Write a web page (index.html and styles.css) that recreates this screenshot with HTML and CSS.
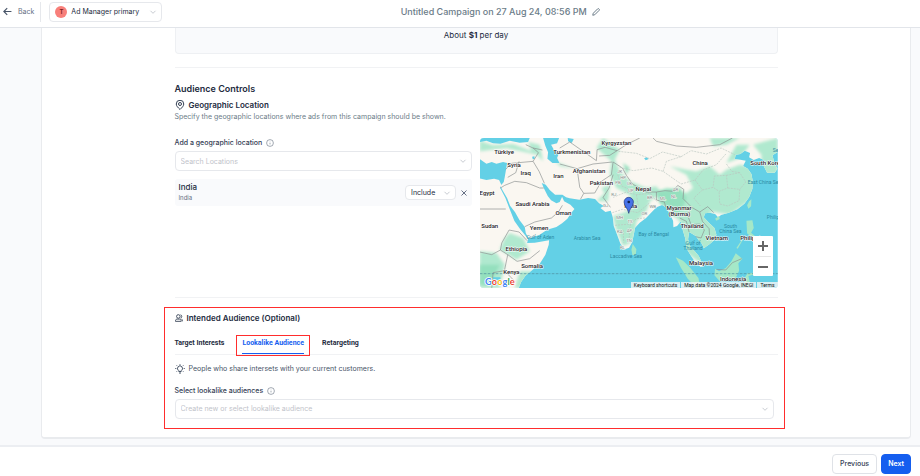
FILE: index.html
```
<!DOCTYPE html>
<html lang="en">
<head>
  <meta charset="UTF-8" />
  <meta name="viewport" content="width=device-width, initial-scale=1">
  <title>Untitled Campaign</title>
  <link rel="stylesheet" href="styles.css">
</head>
<body>
  <svg class="defs" aria-hidden="true">
    <symbol id="chevron" viewBox="0 0 8 8"><path d="M1.5 2.8 4 5.3l2.5-2.5"/></symbol>
    <symbol id="info" viewBox="0 0 16 16"><circle cx="8" cy="8" r="6.8"/><path d="M8 7.4v3.4M8 5v.6"/></symbol>
  </svg>

  <header class="topbar">
    <a href="#" class="back">
      <svg class="icon" viewBox="0 0 16 16"><path d="M15 8H1.5M7.5 2l-6 6 6 6"/></svg>
      Back
    </a>
    <div class="select-wrap account">
      <span class="avatar">T</span>
      <select aria-label="Account"><option>Ad Manager primary</option></select>
      <svg class="chevron"><use href="#chevron"/></svg>
    </div>
    <div class="campaign">
      <h1>Untitled Campaign on 27 Aug 24, 08:56 PM</h1>
      <button type="button" class="plain" aria-label="Edit name">
        <svg class="icon" viewBox="0 0 16 16"><path d="M1.5 14.5l1-4L11.300 1.700a1.700 1.700 0 0 1 2.500 0l.5.5a1.700 1.700 0 0 1 0 2.500L5.500 13.500z"/></svg>
      </button>
    </div>
  </header>

  <main class="page">
    <div class="card">
      <div class="content">
        <div class="budget">About <b>$1</b> per day</div>
        <hr>

        <section class="controls">
          <h2>Audience Controls</h2>
          <h3>
            <svg class="icon" viewBox="0 0 18 20"><path d="M9 19C5 15 1.500 12 1.500 8a7.500 7.500 0 0 1 15 0c0 4-3.500 7-7.500 11z"/><circle cx="9" cy="8" r="3"/></svg>
            Geographic Location
          </h3>
          <p class="desc">Specify the geographic locations where ads from this campaign should be shown.</p>

          <div class="geo">
            <div class="geo-form">
              <label for="location">Add a geographic location <svg class="info"><use href="#info"/></svg></label>
              <div class="select-wrap field">
                <input type="text" id="location" placeholder="Search Locations">
                <svg class="chevron"><use href="#chevron"/></svg>
              </div>
              <div class="place">
                <div class="place-name">
                  <strong>India</strong>
                  <span>India</span>
                </div>
                <div class="select-wrap include">
                  <select aria-label="Include or exclude"><option>Include</option><option>Exclude</option></select>
                  <svg class="chevron"><use href="#chevron"/></svg>
                </div>
                <button type="button" class="plain remove" aria-label="Remove">
                  <svg viewBox="0 0 8 8"><path d="M1.500 1.500l5 5M6.500 1.500l-5 5"/></svg>
                </button>
              </div>
            </div>

            <div class="map">
              <svg class="map-canvas" viewBox="0 0 894 450" preserveAspectRatio="xMidYMid slice">
                <defs>
                  <filter id="soft" x="-10%" y="-10%" width="120%" height="120%"><feGaussianBlur stdDeviation="5"/></filter>
                  <clipPath id="land">
                    <path id="asia" d="M0 0H894V42L878 52 884 75 893 92 885 104 862 104 852 84 857 68 838 60 822 66 808 58 811 45 795 38 782 48 768 50 765 63 782 65 798 68 790 84 804 92 815 108 819 130 818 152 808 178 794 197 773 214 747 224 724 231 715 238 706 228 690 224 676 226 672 238 686 253 704 270 710 290 704 306 690 318 672 331 667 318 658 308 648 294 637 287 628 282 625 304 632 327 645 340 657 354 671 384 663 387 646 372 634 354 620 331 617 303 609 276 604 250 592 264 581 268 580 248 569 226 558 208 547 201 530 208 514 224 499 240 480 254 466 269 462 291 457 313 448 329 435 334 422 317 411 287 402 264 399 238 393 218 377 222 362 210 373 204 358 196 346 183 325 180 299 185 270 181 259 178 248 170 226 170 210 156 198 140 186 135 192 150 204 174 214 187 230 196 240 192 247 176 253 190 272 200 284 213 272 228 263 242 247 256 230 267 202 275 180 290 147 302 138 285 135 267 119 246 106 223 91 203 82 180 68 156 62 144 72 132 75 117 79 94 82 75 70 72 50 77 36 72 20 77 0 63z"/>
                    <path id="africa" d="M0 121 20 126 43 122 58 126 65 141 61 149 77 180 90 214 104 249 121 273 135 290 145 303 142 315 165 314 208 307 207 320 197 350 180 377 157 397 137 413 124 432 117 450H0z"/>
                  </clipPath>
                </defs>
                <rect class="sea" width="894" height="450"/>
                <g class="ground"><use href="#asia"/><use href="#africa"/></g>
                <g clip-path="url(#land)">
                  <g class="green" filter="url(#soft)">
                    <path d="M0 8 40 22 100 18 155 40 145 12 180 20 190 70 172 50 80 30 0 40zM225 70 245 78 285 92 240 84z"/>
                    <path d="M370 0 420 35 405 65 420 100 450 130 500 150 530 145 545 165 510 190 500 220 470 250 462 310 430 325 408 270 400 235 430 225 460 210 450 170 410 150 390 110 395 70 350 30z"/>
                    <path d="M570 85 620 110 640 150 620 165 560 150 530 165 545 200 600 250 615 340 680 390 720 290 690 220 750 230 820 180 830 90 780 80 740 95 720 110 690 85 650 100 620 95z"/>
                    <path d="M690 0H780L740 20 700 25zM820 20 894 0V110H845V50zM740 75 770 20 810 20 780 60z"/>
                    <path d="M90 285 130 300 150 340 110 365 85 350 60 335 75 300zM0 340 50 345 75 380 60 450H0zM120 400 160 400 130 450H105z"/>
                    <path d="M350 190 375 165 365 150 390 140 385 190z"/>
                  </g>
                  <g class="green deep" filter="url(#soft)">
                    <path d="M530 160 600 150 620 180 600 230 580 235 570 205 540 195zM0 380 60 380 30 440H0zM430 75 450 90 440 110z"/>
                  </g>
                </g>
                <g class="island">
                  <path d="M588 358 610 368 632 390 656 420 662 450H650L624 422 604 390z"/>
                  <path d="M706 392 718 400 738 390 755 370 768 346 788 362 776 376 778 398 764 428 720 430 704 412z"/>
                  <path d="M800 248 818 247 822 270 814 284 830 298 820 302 802 286zM826 318 850 345 880 378 868 388 840 370zM770 330 786 306 790 304 774 332z"/>
                  <path d="M808 190 815 184 814 205 806 212 802 202zM706 242 718 234 720 243 710 248zM459 318 470 334 468 350 458 352 455 335z"/>
                  <path d="M796 418 804 405 842 404 806 414 812 440 800 450H792z"/>
                </g>
                <g class="water">
                  <path d="M0 0H150L145 12 120 14 90 8 62 17 40 16 20 8 0 12zM190 0H238L232 16 214 20 225 40 237 47 232 60 239 75 218 75 203 62 205 43 197 24z"/>
                  <path d="M264 0 282 3 276 15 265 10zM46 80 66 84 56 92 48 89zM40 418 62 418 64 435 46 444 38 434zM157 56l7-1 1 7-6 2zM493 61l8-3 6 5-9 4z"/>
                </g>
                <g class="border">
                  <path d="M0 213H78M62 150 75 142 105 130 140 134 180 150 192 150M78 94 95 76 160 70M118 70 108 104 84 118M160 70 178 100 194 136M160 30 176 44 160 70M138 20 160 30 188 36M240 78 292 92 296 120 300 148 312 166 302 184M292 92 340 78 398 72M240 30 270 12 310 40 350 68M350 68 352 35 376 28 412 38 390 52 358 54M312 166 345 165 365 130 395 110 400 72M400 72 428 90 440 112 458 138 500 162 530 162M400 110 388 150 370 178 392 208M530 162 556 158 580 160 594 142 612 154M530 162 530 186 554 192 558 208M612 154 610 182 636 208 622 228 634 260M636 208 660 222 684 206 702 224M660 222 668 250 688 272 690 300M634 260 660 258 674 276 664 300 648 296M600 240 620 250 628 282M520 0 530 10 590 24 650 28 720 20 758 0M412 38 440 20 480 0"/>
                  <path d="M135 266 165 252 215 240 236 222M236 222 248 202M88 276 66 315 62 336 84 350 112 370 150 362 180 338M88 276 118 282 142 308M0 342 36 350 62 336M84 350 74 398 40 404 36 450M74 398 105 430M710 394 738 396 758 374 786 362"/>
                </g>
                <g class="province">
                  <path d="M416 40 470 46 510 62 548 42 604 56 634 38 680 48 724 30 765 50M420 88 460 98 516 90 550 100 604 138M550 100 560 70 604 56M604 138 646 126 670 96 710 80 740 46M646 126 668 156 642 180 662 204M668 156 700 148 718 160 744 150 740 112 704 114 700 148M744 150 780 154 778 188 744 204 720 198 718 160M740 112 780 104 798 132 780 154M740 78 756 100 780 104M400 178 440 162 470 170 512 166M398 224 428 214 474 224 508 196M406 262 452 258 470 242 496 240M430 276 432 314M452 258 448 300M470 170 476 206M512 166 530 190M414 110 426 144 458 158"/>
                </g>
                <path class="equator" d="M0 407H894"/>

                <g class="state">
                  <text x="402" y="174">RJ</text><text x="378" y="208">GJ</text><text x="420" y="242">MH</text><text x="451" y="256">TS</text>
                  <text x="420" y="285">KA</text><text x="449" y="282">AP</text><text x="448" y="313">TN</text><text x="428" y="332">KL</text>
                  <text x="494" y="232">OR</text><text x="519" y="209">WB</text><text x="510" y="184">BR</text><text x="454" y="163">UP</text>
                  <text x="549" y="185">ML</text><text x="582" y="181">NL</text><text x="587" y="158">AR</text><text x="415" y="139">PB</text>
                  <text x="449" y="141">UK</text><text x="430" y="122">HP</text><text x="420" y="105">JK</text>
                </g>
                <g class="sea-name">
                  <text x="182" y="304">Gulf of Aden</text>
                  <text x="322" y="306">Arabian Sea</text>
                  <text x="522" y="295">Bay of Bengal</text>
                  <text x="439" y="359">Laccadive Sea</text>
                  <text x="640" y="321">Gulf of</text><text x="640" y="336">Thailand</text>
                  <text x="752" y="270">South</text><text x="752" y="285">China Sea</text>
                  <text x="854" y="138">East China Sea</text>
                  <text x="894" y="242">Philippine</text>
                  <text x="900" y="41">Sea of</text>
                </g>
                <g class="country">
                  <text x="73" y="49">Türkiye</text><text x="103" y="88">Syria</text><text x="138" y="112">Iraq</text>
                  <text x="276" y="49">Turkmenistan</text><text x="410" y="22">Kyrgyzstan</text><text x="236" y="121">Iran</text>
                  <text x="328" y="104">Afghanistan</text><text x="365" y="142">Pakistan</text><text x="22" y="172">Egypt</text>
                  <text x="158" y="204">Saudi Arabia</text><text x="251" y="232">Oman</text><text x="178" y="275">Yemen</text>
                  <text x="30" y="271">Sudan</text><text x="110" y="338">Ethiopia</text><text x="157" y="389">Somalia</text>
                  <text x="95" y="409">Kenya</text><text x="491" y="160">Nepal</text><text x="453" y="211">India</text>
                  <text x="661" y="81">China</text><text x="861" y="81">South Korea</text><text x="598" y="217">Myanmar</text>
                  <text x="599" y="234">(Burma)</text><text x="637" y="270">Thailand</text><text x="711" y="305">Vietnam</text>
                  <text x="826" y="305">Philippines</text><text x="664" y="381">Malaysia</text><text x="760" y="430">Indonesia</text>
                </g>
                <g class="marker">
                  <path d="M447 226c-2-15-14-20-14-34a14 14 0 0 1 28 0c0 14-12 19-14 34z"/>
                  <circle cx="447" cy="192" r="4"/>
                </g>
                <text class="logo" x="16" y="440"><tspan class="g-blue">G</tspan><tspan class="g-red">o</tspan><tspan class="g-yellow">o</tspan><tspan class="g-blue">g</tspan><tspan class="g-green">l</tspan><tspan class="g-red">e</tspan></text>
              </svg>
              <div class="zoom">
                <button type="button" aria-label="Zoom in"><svg viewBox="0 0 10 10"><path d="M5 0v10M0 5h10"/></svg></button>
                <button type="button" aria-label="Zoom out"><svg viewBox="0 0 10 10"><path d="M0 5h10"/></svg></button>
              </div>
              <div class="credits">
                <button type="button">Keyboard shortcuts</button>
                <span>Map data ©2024 Google, INEGI</span>
                <a href="#">Terms</a>
              </div>
            </div>
          </div>
        </section>
        <hr>

        <section class="intended">
          <h3>
            <svg class="icon" viewBox="0 0 18 18"><circle cx="7.500" cy="5.500" r="4"/><path d="M1 16.500v-1.500c0-2.500 2-3.500 4-3.500h5c2 0 4 1 4 3.500v1.500zM12.500 1.700a4 4 0 0 1 0 7.600M14.500 11.700c1.800.5 2.700 1.500 2.700 3.300v1.500"/></svg>
            Intended Audience (Optional)
          </h3>
          <div class="tabs" role="tablist">
            <button type="button" role="tab">Target Interests</button>
            <button type="button" role="tab" class="active" aria-selected="true">Lookalike Audience</button>
            <button type="button" role="tab">Retargeting</button>
          </div>
          <p class="tip">
            <svg class="icon" viewBox="0 0 20 20"><path d="M7.500 15v-1.800a5 5 0 1 1 5 0V15zM8 18h4M10 .5v2M.5 9h2M17.500 9h2M3.300 2.800l1.400 1.400M16.700 2.800l-1.400 1.400M3.300 15.200l1.400-1.400M16.700 15.200l-1.400-1.400"/></svg>
            People who share intersets with your current customers.
          </p>
          <label for="lookalike">Select lookalike audiences <svg class="info"><use href="#info"/></svg></label>
          <div class="select-wrap field">
            <select id="lookalike" class="empty"><option>Create new or select lookalike audience</option></select>
            <svg class="chevron"><use href="#chevron"/></svg>
          </div>
        </section>
      </div>
    </div>
  </main>

  <footer class="actions">
    <button type="button" class="btn">Previous</button>
    <button type="button" class="btn primary">Next</button>
  </footer>
</body>
</html>
```

FILE: styles.css
```
*, *::before, *::after { box-sizing: border-box; }

body {
  margin: 0;
  min-height: 100vh;
  display: flex;
  flex-direction: column;
  background: #f9fafc;
  color: #232b3e;
  font-family: Inter, sans-serif;
  font-size: 7px;
  line-height: 10px;
}

h1, h2, h3, p { margin: 0; }
button, input, select { font: inherit; color: inherit; }
button { cursor: pointer; }
svg { fill: none; stroke: currentColor; }
.defs { display: none; }

.plain {
  display: flex;
  padding: 0;
  border: none;
  background: none;
}

hr {
  width: 100%;
  margin: 0;
  border: none;
  border-top: 1px solid #f1f2f4;
}

/* top bar */
.topbar {
  display: flex;
  align-items: center;
  height: 28px;
  padding: 0 82px 4px 3px;
  background: #fff;
  border-bottom: 1px solid #e2e5ea;
}
.back {
  display: flex;
  align-items: center;
  gap: 6px;
  height: 20px;
  padding-right: 6px;
  border-right: 1px solid #e6e8ec;
  color: #667085;
  text-decoration: none;
}
.back .icon { width: 9px; height: 9px; stroke: #475467; stroke-width: 2; }
.account { width: 113px; height: 20px; margin-left: 8px; padding-left: 5px; }
.avatar {
  flex: none;
  width: 12px;
  height: 12px;
  border-radius: 50%;
  background: #f87f7a;
  color: #7a1d1d;
  font-size: 6px;
  font-weight: 600;
  line-height: 12px;
  text-align: center;
}
.campaign {
  flex: 1;
  display: flex;
  justify-content: center;
  align-items: center;
  gap: 5px;
  color: #6b7c88;
}
.campaign h1 { font-size: 9px; font-weight: 500; line-height: 12px; }
.campaign .icon { width: 8px; height: 8px; stroke-width: 2; }

/* select boxes */
.select-wrap {
  display: flex;
  align-items: center;
  background: #fff;
  border: 1px solid #e6e8ec;
  border-radius: 4px;
}
.select-wrap select,
.select-wrap input {
  flex: 1;
  min-width: 0;
  height: 100%;
  padding: 0 0 0 5px;
  border: none;
  outline: none;
  background: none;
  appearance: none;
}
.select-wrap .empty,
.select-wrap input::placeholder { color: #bfc3ca; opacity: 1; }
.account select { padding-left: 4px; }
.chevron { flex: none; width: 8px; height: 8px; margin-right: 4px; stroke: #c8ccd2; }
.field { height: 20px; }
.info { width: 8px; height: 8px; color: #475467; }

/* page */
.page {
  flex: 1;
  display: flex;
  padding: 0 9px 6px 41px;
}
.card {
  flex: 1;
  padding: 0 60px 8px;
  background: #fff;
  border: 1px solid #e9ebee;
  border-top: none;
  border-bottom-width: 2px;
  border-radius: 0 0 4px 4px;
}
.content {
  max-width: 603px;
  margin: 0 auto;
}
.budget {
  height: 26px;
  margin-bottom: 13px;
  background: #f9fafc;
  border: 1px solid #eef0f3;
  border-top: none;
  border-radius: 0 0 4px 4px;
  font-size: 8px;
  line-height: 14px;
  text-align: center;
}

h2 { font-size: 9px; font-weight: 600; line-height: 16px; }
h3 {
  display: flex;
  align-items: center;
  gap: 4px;
  font-size: 8px;
  font-weight: 600;
  line-height: 12px;
}
h3 .icon { width: 10px; height: 10px; stroke: #344054; stroke-width: 2; }
label {
  display: flex;
  align-items: center;
  gap: 4px;
  margin-bottom: 3px;
  color: #344054;
  font-weight: 500;
}

.controls { padding: 13px 0 9px; }
.controls h3 { margin-top: 2px; }
.desc { margin: 1px 0 16px; color: #6b7c88; }
.geo {
  display: grid;
  grid-template-columns: 1fr 1fr;
  gap: 8px;
}
.place {
  display: flex;
  align-items: center;
  gap: 4px;
  margin-top: 8px;
  padding: 3px 4px;
  background: #f9fafc;
  border-radius: 3px;
}
.place-name { flex: 1; }
.place-name strong, .place-name span { display: block; }
.place-name strong { font-size: 8px; font-weight: 500; line-height: 11px; }
.place-name span { color: #667085; font-size: 6px; }
.include { width: 51px; height: 15px; }
.remove { color: #667085; }
.remove svg { width: 8px; height: 8px; }

/* map */
.map {
  position: relative;
  height: 150px;
  border-radius: 4px;
  overflow: hidden;
  font-family: Roboto, sans-serif;
}
.map-canvas { display: block; width: 100%; height: 100%; stroke: none; }
.map-canvas text { text-anchor: middle; paint-order: stroke; stroke-linejoin: round; }
.sea, .water { fill: #63d0e6; }
.ground { fill: #faf7f1; }
.green { fill: #b0e9cf; }
.deep { fill: #94e0be; }
.island { fill: #a5e8c8; }
.border { stroke: #8b8f90; stroke-width: 2; }
.province { stroke: #b9c6c0; stroke-width: 2; stroke-dasharray: 6 3; }
.equator { stroke: #4c8c9d; stroke-width: 2; stroke-dasharray: 8 4; }
.country { fill: #1f2326; stroke: #fff; stroke-width: 3; font-size: 18px; font-weight: 500; }
.sea-name { fill: #2b8aa3; font-size: 15px; }
.state { fill: #858c8b; stroke: #f4f6f2; stroke-width: 3; font-size: 13px; }
.marker path { fill: #4772e8; stroke: #1c3478; stroke-width: 2; }
.marker circle { fill: #10204f; }
.map-canvas .logo {
  text-anchor: start;
  stroke: #fff;
  stroke-width: 5;
  font-family: Lato, sans-serif;
  font-size: 28px;
  font-weight: 700;
}
.g-blue { fill: #4285f4; }
.g-red { fill: #ea4335; }
.g-yellow { fill: #fbbc04; }
.g-green { fill: #34a853; }

.zoom {
  position: absolute;
  right: 5px;
  bottom: 12px;
  width: 20px;
  padding: 0 2px;
  background: #fff;
  border-radius: 1px;
}
.zoom button {
  display: flex;
  align-items: center;
  justify-content: center;
  width: 100%;
  height: 20px;
  padding: 0;
  border: none;
  background: none;
}
.zoom button + button { border-top: 1px solid #e6e6e6; }
.zoom svg { width: 10px; height: 10px; stroke: #666; stroke-width: 2; }
.credits {
  position: absolute;
  right: 0;
  bottom: 0;
  display: flex;
  gap: 1px;
  color: #111;
  font-size: 5px;
  line-height: 6px;
}
.credits > * {
  padding: 0 3px;
  border: none;
  background: rgba(245, 245, 245, .8);
  color: inherit;
  text-decoration: none;
}

/* intended audience */
.intended {
  margin: 9px -7px 0 -11px;
  padding: 4px 10px 9px;
  border: 1px solid #ff2d2d;
}
.intended h3 .icon { width: 8px; height: 8px; }
.tabs {
  display: flex;
  gap: 18px;
  margin: 11px -4px 9px 0;
  border-bottom: 1px solid #f1f2f4;
}
.tabs button {
  position: relative;
  padding: 3px 0 6px;
  border: none;
  background: none;
  font-family: Roboto, sans-serif;
  font-weight: 700;
}
.tabs .active { color: #155eef; box-shadow: inset 0 -1px #155eef; }
.tabs .active::after {
  content: '';
  position: absolute;
  inset: 0 -6px -2px;
  border: 1px solid #ff2d2d;
}
.tip {
  display: flex;
  align-items: center;
  gap: 4px;
  margin-bottom: 12px;
  color: #475467;
}
.tip .icon { width: 10px; height: 10px; stroke-width: 2; }

/* footer */
.actions {
  display: flex;
  justify-content: flex-end;
  gap: 4px;
  padding: 7px 9px 3px;
  background: #fff;
  border-top: 2px solid #eceef2;
}
.btn {
  height: 20px;
  padding: 0 7px;
  background: #fff;
  border: 1px solid #dfe2e7;
  border-radius: 4px;
  color: #344054;
  font-weight: 500;
}
.btn.primary {
  padding: 0 6px;
  background: #155eef;
  border-color: #155eef;
  color: #fff;
  font-weight: 600;
}
```
